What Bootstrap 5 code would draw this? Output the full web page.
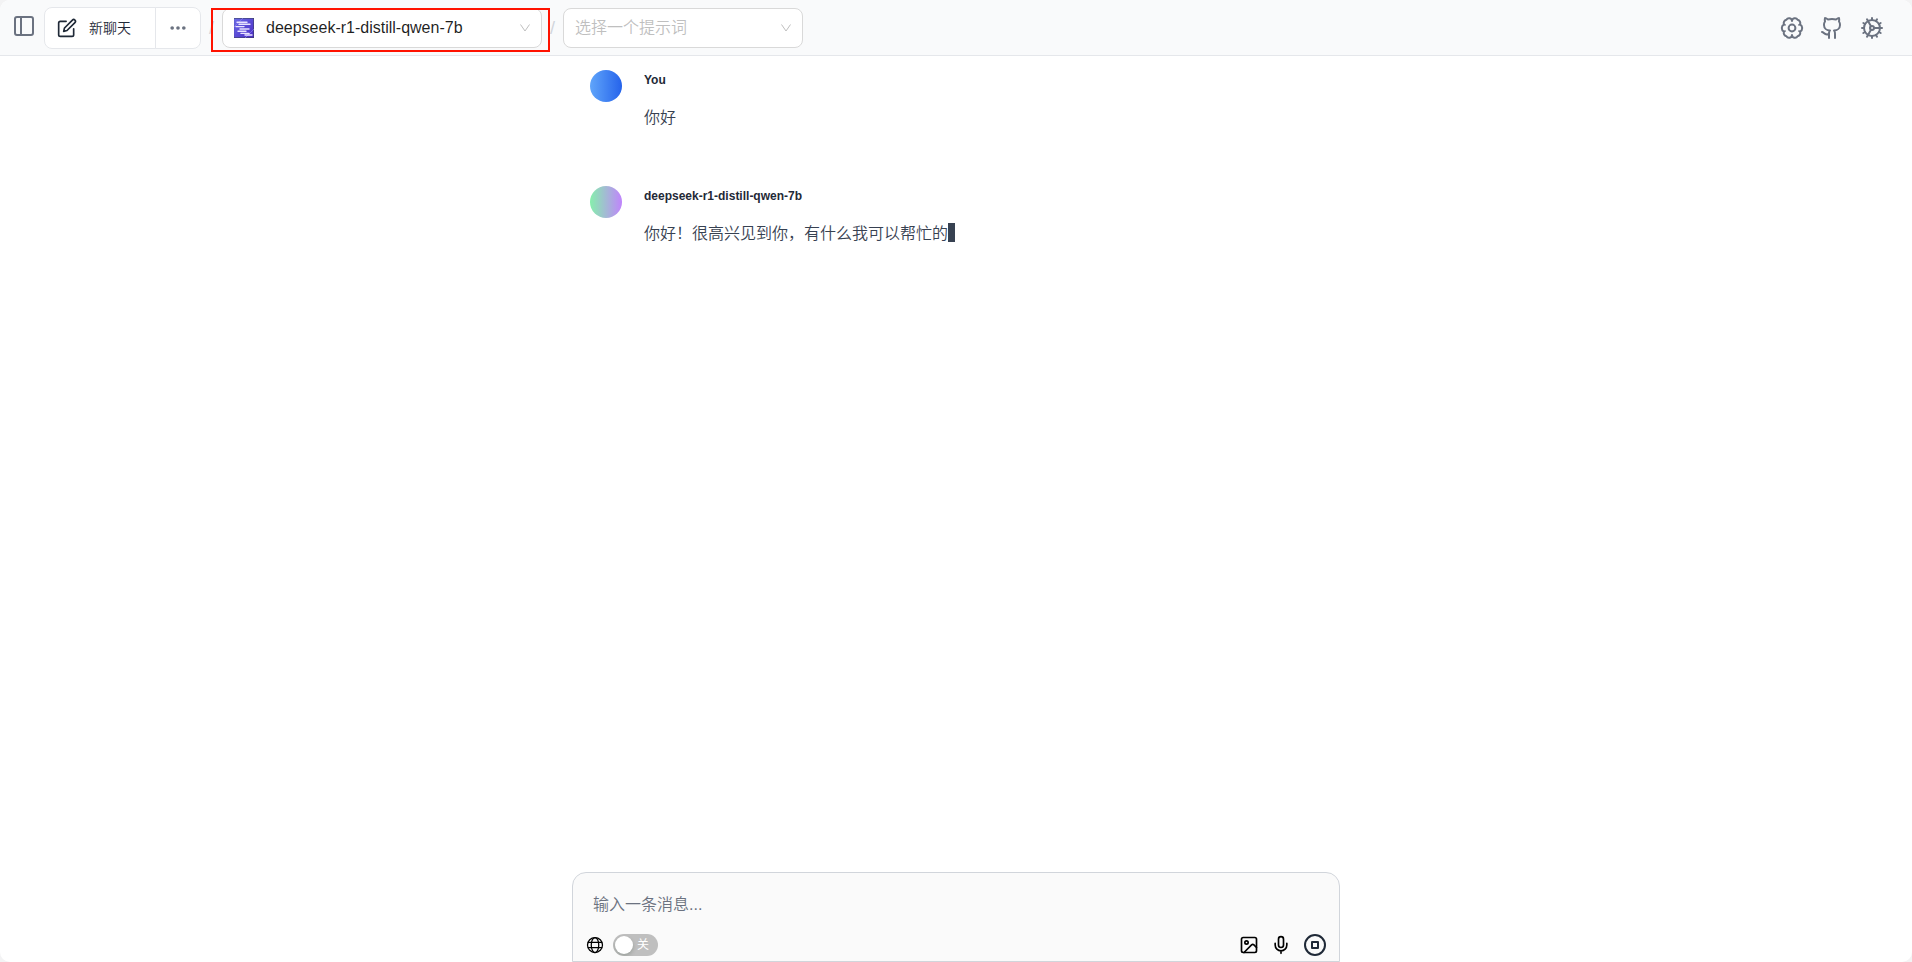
<!DOCTYPE html>
<html lang="zh-CN">
<head>
<meta charset="utf-8">
<meta name="viewport" content="width=device-width, initial-scale=1">
<title>新聊天</title>
<link href="https://cdn.jsdelivr.net/npm/bootstrap@5.3.0/dist/css/bootstrap.min.css" rel="stylesheet">
<style>
body{background:#f3f3f4;font-family:"Liberation Sans","Noto Sans CJK SC",sans-serif;font-size:16px;font-weight:350;line-height:24px;color:#374151}
.app-shell{background:#fff;border-radius:10px}
.topbar{background:#f9fafb;border-bottom:1px solid #e5e7eb;height:56px;padding:0 28px 0 12px}
svg{display:block;fill:none;stroke:currentColor;stroke-linecap:round;stroke-linejoin:round;flex:none}
.icon-btn{padding:0;border:0;background:none;color:#6b7280}
.ink{color:#000}
.stop-btn{color:#1f2937}
.chat-actions .btn{height:42px;border:1px solid #e5e7eb;background:#fff;color:#1f2937;font-size:14px;font-weight:350;line-height:20px;border-radius:8px}
.chat-actions .new-chat{width:112px;padding:0 12px;gap:12px;border-radius:8px 0 0 8px}
.chat-actions .more{width:46px;color:#6b7280;border-radius:0 8px 8px 0}
.slash{width:21px;color:#d1d5db;font-size:18px;text-align:center}
.picker .form-select{height:40px;border:1px solid #d9d9d9;border-radius:8px;padding:0 32px 0 11px;font-weight:350;color:rgba(0,0,0,.88);background-color:#fff;background-size:12px 12px;background-position:right 10px center;background-image:url("data:image/svg+xml,%3Csvg xmlns='http://www.w3.org/2000/svg' viewBox='0 0 12 12'%3E%3Cpath d='M1.5 2.5 6 9l4.5-6.5' fill='none' stroke='%23bfbfbf'/%3E%3C/svg%3E")}
.picker .model-select{padding-left:43px}
.picker .prompt-select{color:#bfbfbf}
.model-picker{width:320px}
.prompt-picker{width:240px}
.model-logo{position:absolute;left:12px;top:10px;pointer-events:none}
.marker-box{position:absolute;inset:0 -8px -4px -11px;border:2px solid #ff1200;pointer-events:none}
.column{width:100%;max-width:768px}
.message{padding:14px 18px;gap:22px;min-height:116px}
.avatar{width:32px;height:32px;flex:none;border-radius:50%}
.avatar-user{background:linear-gradient(to right,#60a5fa,#2563eb)}
.avatar-bot{background:linear-gradient(to right,#86efac,#c084fc)}
.author{font-size:12px;line-height:20px;font-weight:700;color:#1f2937;margin-bottom:16px}
.caret{display:inline-block;width:7px;height:19px;background:#374151;vertical-align:-3px}
.composer{background:#fafafa;border:1px solid #d1d5db;border-radius:14px 14px 0 0;padding:20px 12px 4px}
.composer textarea{border:0;background:none;padding:0 8px;height:24px;min-height:24px;line-height:24px;font-weight:350;resize:none;color:#374151;overflow:hidden}
.composer textarea:focus{background:none}
.composer textarea::placeholder{color:#6b7280;opacity:1}
.tools{height:24px;margin-top:16px}
.toggle{width:45px;height:22px}
.toggle input{appearance:none;width:100%;height:100%;margin:0;border-radius:11px;background:#bfbfbf;display:block;overflow:hidden}
.toggle input::before{content:"";display:block;width:18px;height:18px;margin:2px;border-radius:50%;background:#fff;box-shadow:0 2px 4px rgba(0,35,11,.2)}
.toggle span{position:absolute;right:9px;top:0;font-size:12px;line-height:22px;color:#fff;font-weight:400;pointer-events:none}
</style>
<script src="https://cdn.jsdelivr.net/npm/bootstrap@5.3.0/dist/js/bootstrap.bundle.min.js"></script>
</head>
<body>
<div class="app-shell d-flex flex-column vh-100 overflow-hidden">
<header class="topbar d-flex align-items-center">
  <button class="icon-btn me-2 mb-1" aria-label="侧边栏"><svg width="24" height="24" viewBox="0 0 24 24" stroke-width="2"><rect x="3" y="3" width="18" height="18" rx="2"/><path d="M9 3v18"/></svg></button>
  <div class="btn-group chat-actions">
    <button class="btn new-chat d-flex align-items-center"><svg width="20" height="20" viewBox="0 0 24 24" stroke-width="2"><path d="M11 4H4a2 2 0 0 0-2 2v14a2 2 0 0 0 2 2h14a2 2 0 0 0 2-2v-7"/><path d="M18.5 2.5a2.12 2.12 0 0 1 3 3L12 15l-4 1 1-4Z"/></svg>新聊天</button>
    <button class="btn more d-flex align-items-center justify-content-center p-0" aria-label="更多"><svg width="20" height="20" viewBox="0 0 24 24" stroke-width="2"><circle cx="12" cy="12" r="1.2" fill="currentColor"/><circle cx="19" cy="12" r="1.2" fill="currentColor"/><circle cx="5" cy="12" r="1.2" fill="currentColor"/></svg></button>
  </div>
  <span class="slash">/</span>
  <div class="picker model-picker position-relative">
    <select class="form-select model-select" aria-label="模型"><option>deepseek-r1-distill-qwen-7b</option></select>
    <svg class="model-logo" width="20" height="20" viewBox="0 0 20 20" stroke="none"><defs><linearGradient id="logo" x1="0" y1="0" x2="1" y2="1"><stop stop-color="#6b6be8"/><stop offset="1" stop-color="#4a2bc4"/></linearGradient></defs><path fill="url(#logo)" d="M0 0h20v20H0z"/><path d="m0 9 9-9M11 20l9-9" stroke="#8d83ee" stroke-width=".7"/><path d="M3 4.3h10M5 6.3h11M2 8.6h8M6 11h9M4 13.2h8M7 15.4h8M11 17h7" stroke="#e9e4ff" stroke-width="1.4"/></svg>
    <div class="marker-box"></div>
  </div>
  <span class="slash">/</span>
  <div class="picker prompt-picker"><select class="form-select prompt-select" aria-label="提示词"><option>选择一个提示词</option></select></div>
  <nav class="d-flex gap-3 ms-auto">
    <a href="#" class="icon-btn" aria-label="模型设置"><svg width="24" height="24" viewBox="0 0 24 24" stroke-width="2"><circle cx="12" cy="12" r="3.4"/><path d="M12 5a3 3 0 0 0-5.6-1.3 3.5 3.5 0 0 0-2.5 4.6 4.3 4.3 0 0 0 0 7.4 3.5 3.5 0 0 0 2.5 4.6A3 3 0 0 0 12 19a3 3 0 0 0 5.6 1.3 3.5 3.5 0 0 0 2.5-4.6 4.3 4.3 0 0 0 0-7.4 3.5 3.5 0 0 0-2.5-4.6A3 3 0 0 0 12 5Z"/><path d="m3.9 8.3 1.3.7M20.1 8.3l-1.3.7M3.9 15.7l1.3-.7M20.1 15.7l-1.3-.7" stroke-width="1.5"/></svg></a>
    <a href="#" class="icon-btn" aria-label="GitHub"><svg width="24" height="24" viewBox="0 0 24 24" stroke-width="2"><path d="M15 22v-4a4.800 4.800 0 0 0-1-3.500c3 0 6-2 6-5.500.08-1.250-.27-2.480-1-3.500.28-1.150.28-2.350 0-3.500 0 0-1 0-3 1.500-2.640-.5-5.360-.5-8 0C6 2 5 2 5 2c-.3 1.150-.3 2.350 0 3.500A5.403 5.403 0 0 0 4 9c0 3.500 3 5.500 6 5.500-.39.49-.68 1.050-.85 1.650-.17.6-.22 1.230-.15 1.850v4"/><path d="M9 18c-4.510 2-5-2-7-2"/></svg></a>
    <a href="#" class="icon-btn" aria-label="设置"><svg width="24" height="24" viewBox="0 0 24 24" stroke-width="2"><circle cx="12" cy="12" r="8"/><circle cx="12" cy="12" r="2"/><path d="M12 2v2M12 22v-2M17 20.660l-1-1.730M11 10.270 7 3.340M20.660 17l-1.730-1M3.340 7l1.730 1M14 12h8M2 12h2M20.660 7l-1.730 1M3.340 17l1.730-1M17 3.340l-1 1.730M11 13.730l-4 6.930"/></svg></a>
  </nav>
</header>
<main class="flex-grow-1 overflow-auto">
  <div class="column mx-auto">
    <article class="message d-flex"><div class="avatar avatar-user"></div><div><div class="author">You</div><div>你好</div></div></article>
    <article class="message d-flex"><div class="avatar avatar-bot"></div><div><div class="author">deepseek-r1-distill-qwen-7b</div><div>你好！很高兴见到你，有什么我可以帮忙的<span class="caret"></span></div></div></article>
  </div>
</main>
<form class="composer column mx-auto">
  <textarea class="form-control shadow-none" rows="1" placeholder="输入一条消息..." aria-label="输入一条消息"></textarea>
  <div class="tools d-flex align-items-center">
    <label for="web" class="ink"><svg width="20" height="20" viewBox="0 0 24 24" stroke-width="1.5"><circle cx="12" cy="12" r="9"/><ellipse cx="12" cy="12" rx="4.500" ry="9"/><path d="M4 8.800h16M4 15.200h16"/></svg></label>
    <div class="toggle position-relative ms-2"><input type="checkbox" role="switch" id="web" aria-label="联网搜索"><span>关</span></div>
    <div class="d-flex align-items-center gap-2 ms-auto">
      <button type="button" class="icon-btn ink me-1" aria-label="图片"><svg width="20" height="20" viewBox="0 0 24 24" stroke-width="2"><rect x="3" y="3" width="18" height="18" rx="2"/><circle cx="9" cy="9" r="2"/><path d="m21 15-3.090-3.090a2 2 0 0 0-2.820 0L6 21"/></svg></button>
      <button type="button" class="icon-btn ink me-1" aria-label="语音"><svg width="20" height="20" viewBox="0 0 24 24" stroke-width="2"><path d="M12 2a3 3 0 0 0-3 3v7a3 3 0 0 0 6 0V5a3 3 0 0 0-3-3Z"/><path d="M19 10v2a7 7 0 0 1-14 0v-2M12 19v3"/></svg></button>
      <button type="button" class="icon-btn stop-btn" aria-label="停止"><svg width="24" height="24" viewBox="0 0 24 24" stroke-width="2"><circle cx="12" cy="12" r="10"/><rect x="9" y="9" width="6" height="6"/></svg></button>
    </div>
  </div>
</form>
</div>
</body>
</html>
